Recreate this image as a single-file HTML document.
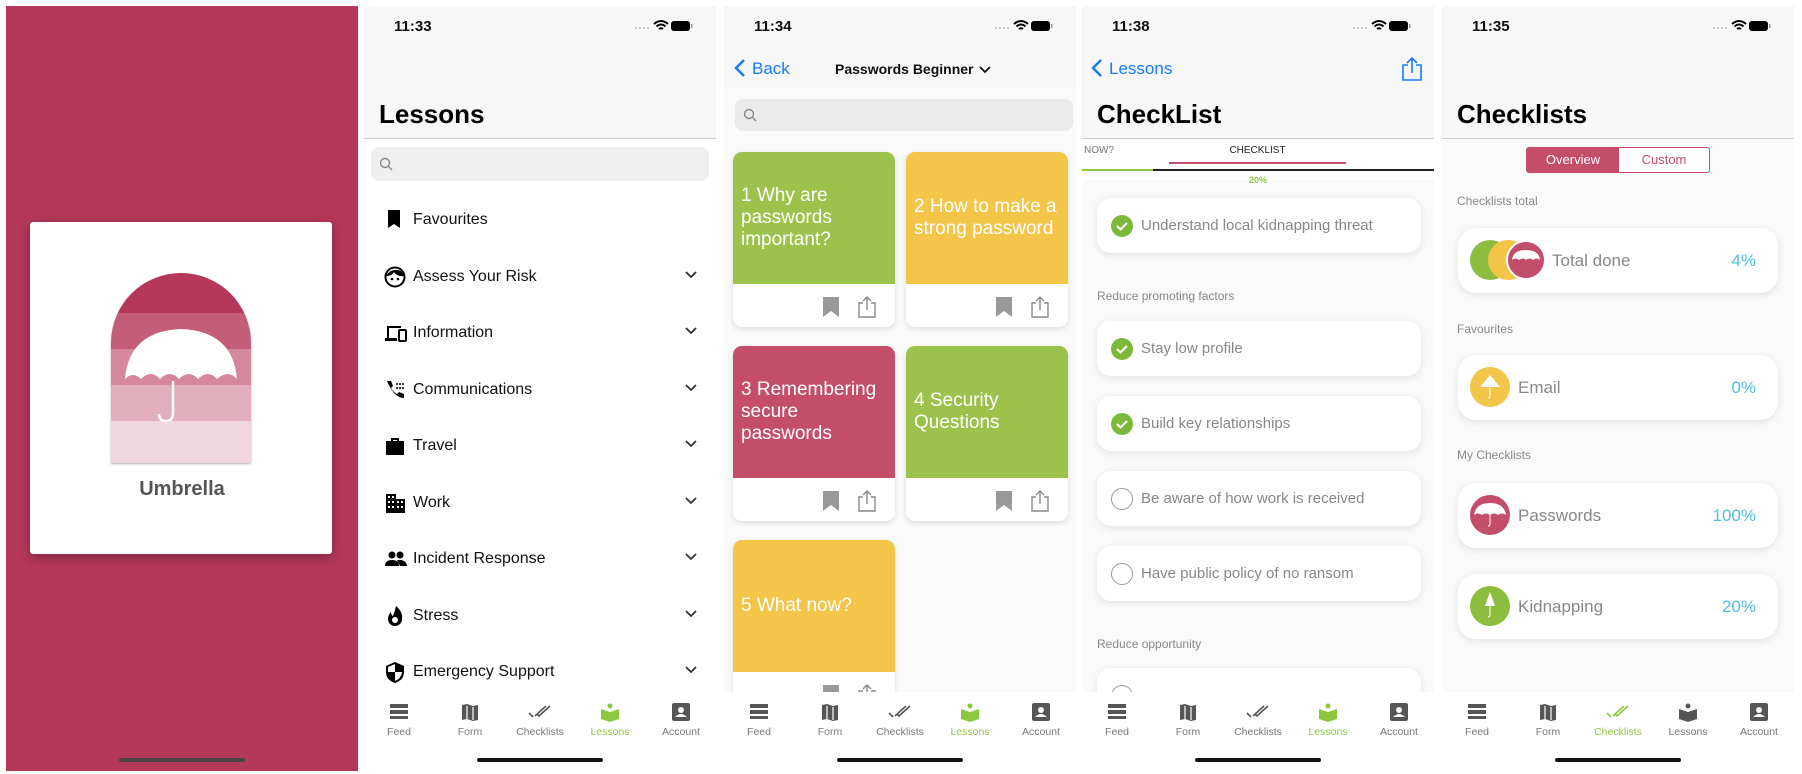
<!DOCTYPE html>
<html><head><meta charset="utf-8">
<style>
*{box-sizing:border-box;margin:0;padding:0}
body{width:1802px;height:774px;background:#fff;font-family:"Liberation Sans",sans-serif;position:relative;overflow:hidden}
.p{position:absolute;top:6px;width:352px;height:765px;overflow:hidden;background:#fff}
.a{position:absolute}
.hdr{position:absolute;left:0;top:0;width:352px;background:#f7f7f7;border-bottom:1px solid #ccc}
.time{position:absolute;left:30px;top:12px;font-size:15px;font-weight:bold;color:#111}
.sb{position:absolute;right:22px;top:13px;width:80px;height:14px}
.big{position:absolute;left:15px;font-size:26px;font-weight:bold;color:#000}
.search{position:absolute;background:#efefef;border-radius:8px}
.tab{position:absolute;left:0;top:686px;width:352px;height:79px;background:#fff}
.ti{position:absolute;top:10px;width:70px;text-align:center;font-size:10.5px;color:#777}
.ti svg{display:block;margin:0 auto 4px}
.home{position:absolute;left:113px;top:752px;width:126px;height:4px;border-radius:2px;background:#111}
.row{position:absolute;left:0;width:352px;height:30px;font-size:16px;color:#111}
.row .ic{position:absolute;left:20px;top:4px}
.row .tx{position:absolute;left:49px;top:6px}
.row .ch{position:absolute;left:321px;top:9px}
.card{position:absolute;width:162px;border-radius:9px;background:#fff;box-shadow:0 2px 6px rgba(0,0,0,.12);overflow:hidden}
.card .top{height:132px;color:#fff;font-size:19px;line-height:22px;padding:0 8px;display:flex;align-items:center}
.ci{position:absolute;left:15px;width:324px;height:55px;background:#fff;border-radius:14px;box-shadow:0 2px 8px rgba(0,0,0,.1);font-size:15px;color:#888}
.ci .ck{position:absolute;left:14px;top:17px;width:22px;height:22px;border-radius:50%}
.ci .t{position:absolute;left:44px;top:19px}
.sec{position:absolute;left:15px;font-size:12px;color:#888}
.cc{position:absolute;left:16px;width:320px;height:65px;background:#fff;border-radius:18px;box-shadow:0 2px 8px rgba(0,0,0,.1);font-size:17px;color:#888}
.cc .c{position:absolute;top:12px;width:40px;height:40px;border-radius:50%}
.cc .t{position:absolute;left:60px;top:23px}
.cc .pc{position:absolute;right:22px;top:23px;color:#4fc0e0}
</style></head><body>

<!-- Panel 1 -->
<div class="p" style="left:6px;background:#b5375a">
  <div class="a" style="left:24px;top:216px;width:302px;height:332px;background:#fff;border-radius:3px;box-shadow:0 3px 10px rgba(0,0,0,.3)"></div>
  <div class="a" style="left:105px;top:267px;width:140px;height:190px;border-radius:70px 70px 0 0;overflow:hidden;box-shadow:0 1px 2px rgba(0,0,0,.3)">
    <div style="height:40px;background:#b5375a"></div>
    <div style="height:36px;background:#c45d7a"></div>
    <div style="height:36px;background:#d4879d"></div>
    <div style="height:36px;background:#e2aebd"></div>
    <div style="height:42px;background:#f0d6de"></div>
    <svg class="a" style="left:0;top:0" width="140" height="190" viewBox="0 0 140 190"><path d="M14 106 Q18 58 70 56 Q122 58 126 106 Q117 96 106 106 Q97 96 87 106 Q78 96 68 106 Q59 96 49 106 Q40 96 30 106 Q22 98 14 106Z" fill="#fff"/><path d="M62 108 V140 Q62 148 55 148 Q48 148 48 141" stroke="#fff" stroke-width="2.5" fill="none"/></svg>
  </div>
  <div class="a" style="left:0;top:472px;width:352px;text-align:center;font-size:20px;color:#555;font-weight:bold">Umbrella</div>
  <div class="home" style="background:#444"></div>
</div>

<!-- Panel 2 Lessons -->
<div class="p" style="left:364px">
  <div class="hdr" style="height:133px"></div>
  <div class="time">11:33</div>
  <svg class="sb" viewBox="0 0 80 14"><g fill="#bbb"><circle cx="22" cy="9" r="1"/><circle cx="26" cy="9" r="1"/><circle cx="30" cy="9" r="1"/><circle cx="34" cy="9" r="1"/></g><path d="M40 5 Q47 -1 54 5 M42.5 7.5 Q47 3.5 51.5 7.5 M45 10 Q47 8.5 49 10" stroke="#000" stroke-width="2" fill="none"/><rect x="57" y="2" width="19" height="10" rx="3" fill="#000"/><rect x="77" y="5" width="1.5" height="4" fill="#999"/></svg>
  <div class="big" style="top:93px">Lessons</div>
  <div class="search" style="left:7px;top:141px;width:338px;height:34px"><svg class="a" style="left:8px;top:10px" width="14" height="14"><circle cx="6" cy="6" r="4.5" stroke="#888" stroke-width="1.4" fill="none"/><path d="M9.5 9.5 L13 13" stroke="#888" stroke-width="1.4"/></svg></div>
  <div class="row" style="top:199px"><svg class="ic" width="20" height="20"><path d="M4 1h12v18l-6-4-6 4z"/></svg><span class="tx">Favourites</span></div>
  <div class="row" style="top:256px"><svg class="ic" width="22" height="22"><circle cx="11" cy="11" r="9.5" stroke="#000" stroke-width="2" fill="none"/><path d="M2 10 Q6 3 14 4 Q19 5 20 10 Q13 11 10 6 Q8 10 2 10Z"/><circle cx="8" cy="13" r="1.3"/><circle cx="14" cy="13" r="1.3"/></svg><span class="tx">Assess Your Risk</span><svg class="ch" width="12" height="8"><path d="M1 1l5 5 5-5" stroke="#333" stroke-width="1.8" fill="none"/></svg></div>
  <div class="row" style="top:312px"><svg class="ic" width="24" height="22"><path d="M3 4h14v2H5v10H3zM1 16h12v3H1z"/><rect x="15" y="8" width="7" height="11" rx="1" stroke="#000" stroke-width="2" fill="none"/></svg><span class="tx">Information</span><svg class="ch" width="12" height="8"><path d="M1 1l5 5 5-5" stroke="#333" stroke-width="1.8" fill="none"/></svg></div>
  <div class="row" style="top:369px"><svg class="ic" width="22" height="22"><path d="M3 2l4 0 2 5-2 2q2 4 6 6l2-2 5 2v4q-10 0-17-17z"/><g fill="#000"><circle cx="13" cy="5" r="1"/><circle cx="16" cy="5" r="1"/><circle cx="19" cy="5" r="1"/><circle cx="13" cy="9" r="1"/><circle cx="16" cy="9" r="1"/><circle cx="19" cy="9" r="1"/></g></svg><span class="tx">Communications</span><svg class="ch" width="12" height="8"><path d="M1 1l5 5 5-5" stroke="#333" stroke-width="1.8" fill="none"/></svg></div>
  <div class="row" style="top:425px"><svg class="ic" width="22" height="22"><path d="M7 3h8v3h5v14H2V6h5zM9 5v1h4V5z"/></svg><span class="tx">Travel</span><svg class="ch" width="12" height="8"><path d="M1 1l5 5 5-5" stroke="#333" stroke-width="1.8" fill="none"/></svg></div>
  <div class="row" style="top:482px"><svg class="ic" width="22" height="22"><path d="M2 2h10v5h9v14H2z"/><g fill="#fff"><rect x="4" y="4" width="2" height="2"/><rect x="8" y="4" width="2" height="2"/><rect x="4" y="9" width="2" height="2"/><rect x="8" y="9" width="2" height="2"/><rect x="13" y="9" width="2" height="2"/><rect x="17" y="9" width="2" height="2"/><rect x="4" y="14" width="2" height="2"/><rect x="8" y="14" width="2" height="2"/><rect x="13" y="14" width="2" height="2"/><rect x="17" y="14" width="2" height="2"/></g></svg><span class="tx">Work</span><svg class="ch" width="12" height="8"><path d="M1 1l5 5 5-5" stroke="#333" stroke-width="1.8" fill="none"/></svg></div>
  <div class="row" style="top:538px"><svg class="ic" width="24" height="22"><circle cx="8" cy="7" r="3.5"/><circle cx="16" cy="7" r="3.5"/><path d="M1 18q0-6 7-6t7 6zM13 12q9-1 10 6h-7z"/></svg><span class="tx">Incident Response</span><svg class="ch" width="12" height="8"><path d="M1 1l5 5 5-5" stroke="#333" stroke-width="1.8" fill="none"/></svg></div>
  <div class="row" style="top:595px"><svg class="ic" width="22" height="22"><path d="M12 1q7 6 6 13a7 7 0 0 1-14 0q0-4 3-7 0 3 2 4 2-5 3-10z"/><circle cx="11" cy="15" r="3" fill="#fff"/></svg><span class="tx">Stress</span><svg class="ch" width="12" height="8"><path d="M1 1l5 5 5-5" stroke="#333" stroke-width="1.8" fill="none"/></svg></div>
  <div class="row" style="top:651px"><svg class="ic" width="22" height="22"><path d="M11 1l9 4v6q0 8-9 11-9-3-9-11V5z"/><path d="M11 3v8h7q-1 7-7 9V11H4V6z" fill="#fff"/></svg><span class="tx">Emergency Support</span><svg class="ch" width="12" height="8"><path d="M1 1l5 5 5-5" stroke="#333" stroke-width="1.8" fill="none"/></svg></div>
  <div class="tab">
    <div class="ti" style="left:0"><svg width="22" height="20"><rect x="2" y="2" width="18" height="4" fill="#555"/><rect x="2" y="8" width="18" height="4" fill="#555"/><rect x="2" y="14" width="18" height="3" fill="#555"/></svg>Feed</div>
    <div class="ti" style="left:71px"><svg width="22" height="20"><path d="M3 3l5-1 6 2 5-1v15l-5 1-6-2-5 1z" fill="#555"/><path d="M8 4v13M14 5v13" stroke="#fff" stroke-width="1.2"/></svg>Form</div>
    <div class="ti" style="left:141px"><svg width="26" height="20"><path d="M2 11l4 4 M8 14l11-10 M10 12l2 2 11-10" stroke="#555" stroke-width="1.6" fill="none"/></svg>Checklists</div>
    <div class="ti" style="left:211px;color:#8dc63f"><svg width="22" height="20"><circle cx="11" cy="4" r="2.5" fill="#8dc63f"/><path d="M2 7l9 3 9-3v10l-9 3-9-3z" fill="#8dc63f"/></svg>Lessons</div>
    <div class="ti" style="left:282px"><svg width="22" height="20"><rect x="2" y="1" width="18" height="18" rx="2" fill="#555"/><circle cx="11" cy="8" r="3" fill="#fff"/><path d="M5 15q6-6 12 0z" fill="#fff"/></svg>Account</div>
  </div>
  <div class="home"></div>
</div>

<!-- Panel 3 Passwords -->
<div class="p" style="left:724px;background:#fafafa">
  <div class="hdr" style="height:83px;border-bottom:none"></div>
  <div class="time">11:34</div>
  <svg class="sb" viewBox="0 0 80 14"><g fill="#bbb"><circle cx="22" cy="9" r="1"/><circle cx="26" cy="9" r="1"/><circle cx="30" cy="9" r="1"/><circle cx="34" cy="9" r="1"/></g><path d="M40 5 Q47 -1 54 5 M42.5 7.5 Q47 3.5 51.5 7.5 M45 10 Q47 8.5 49 10" stroke="#000" stroke-width="2" fill="none"/><rect x="57" y="2" width="19" height="10" rx="3" fill="#000"/><rect x="77" y="5" width="1.5" height="4" fill="#999"/></svg>
  <svg class="a" style="left:10px;top:52px" width="12" height="20"><path d="M10 2L2 10l8 8" stroke="#1a7cf5" stroke-width="2.5" fill="none"/></svg>
  <div class="a" style="left:28px;top:53px;font-size:17px;color:#1a7cf5">Back</div>
  <div class="a" style="left:111px;top:55px;font-size:14px;font-weight:bold;color:#111">Passwords Beginner</div>
  <svg class="a" style="left:255px;top:60px" width="12" height="8"><path d="M1 1l5 5 5-5" stroke="#111" stroke-width="1.8" fill="none"/></svg>
  <div class="search" style="left:11px;top:93px;width:338px;height:32px;background:#eaeaea"><svg class="a" style="left:8px;top:9px" width="14" height="14"><circle cx="6" cy="6" r="4.5" stroke="#888" stroke-width="1.4" fill="none"/><path d="M9.5 9.5 L13 13" stroke="#888" stroke-width="1.4"/></svg></div>
  <div class="card" style="left:9px;top:146px;height:175px"><div class="top" style="background:#9bc34b">1 Why are passwords important?</div><svg class="a" style="left:88px;top:143px" width="60" height="24"><path d="M2 2h16v20l-8-6-8 6z" fill="#999"/><path d="M42 8h-4v14h16V8h-4 M46 15V2 M42 6l4-4 4 4" stroke="#888" stroke-width="1.4" fill="none"/></svg></div>
  <div class="card" style="left:182px;top:146px;height:175px"><div class="top" style="background:#f3c548">2 How to make a strong password</div><svg class="a" style="left:88px;top:143px" width="60" height="24"><path d="M2 2h16v20l-8-6-8 6z" fill="#999"/><path d="M42 8h-4v14h16V8h-4 M46 15V2 M42 6l4-4 4 4" stroke="#888" stroke-width="1.4" fill="none"/></svg></div>
  <div class="card" style="left:9px;top:340px;height:175px"><div class="top" style="background:#c44d6a">3 Remembering secure passwords</div><svg class="a" style="left:88px;top:143px" width="60" height="24"><path d="M2 2h16v20l-8-6-8 6z" fill="#999"/><path d="M42 8h-4v14h16V8h-4 M46 15V2 M42 6l4-4 4 4" stroke="#888" stroke-width="1.4" fill="none"/></svg></div>
  <div class="card" style="left:182px;top:340px;height:175px"><div class="top" style="background:#9bc34b">4 Security Questions</div><svg class="a" style="left:88px;top:143px" width="60" height="24"><path d="M2 2h16v20l-8-6-8 6z" fill="#999"/><path d="M42 8h-4v14h16V8h-4 M46 15V2 M42 6l4-4 4 4" stroke="#888" stroke-width="1.4" fill="none"/></svg></div>
  <div class="card" style="left:9px;top:534px;height:175px"><div class="top" style="background:#f3c548">5 What now?</div><svg class="a" style="left:88px;top:143px" width="60" height="24"><path d="M2 2h16v20l-8-6-8 6z" fill="#999"/><path d="M42 8h-4v14h16V8h-4 M46 15V2 M42 6l4-4 4 4" stroke="#888" stroke-width="1.4" fill="none"/></svg></div>
  <div class="tab">
    <div class="ti" style="left:0"><svg width="22" height="20"><rect x="2" y="2" width="18" height="4" fill="#555"/><rect x="2" y="8" width="18" height="4" fill="#555"/><rect x="2" y="14" width="18" height="3" fill="#555"/></svg>Feed</div>
    <div class="ti" style="left:71px"><svg width="22" height="20"><path d="M3 3l5-1 6 2 5-1v15l-5 1-6-2-5 1z" fill="#555"/><path d="M8 4v13M14 5v13" stroke="#fff" stroke-width="1.2"/></svg>Form</div>
    <div class="ti" style="left:141px"><svg width="26" height="20"><path d="M2 11l4 4 M8 14l11-10 M10 12l2 2 11-10" stroke="#555" stroke-width="1.6" fill="none"/></svg>Checklists</div>
    <div class="ti" style="left:211px;color:#8dc63f"><svg width="22" height="20"><circle cx="11" cy="4" r="2.5" fill="#8dc63f"/><path d="M2 7l9 3 9-3v10l-9 3-9-3z" fill="#8dc63f"/></svg>Lessons</div>
    <div class="ti" style="left:282px"><svg width="22" height="20"><rect x="2" y="1" width="18" height="18" rx="2" fill="#555"/><circle cx="11" cy="8" r="3" fill="#fff"/><path d="M5 15q6-6 12 0z" fill="#fff"/></svg>Account</div>
  </div>
  <div class="home"></div>
</div>

<!-- Panel 4 CheckList -->
<div class="p" style="left:1082px;background:#fafafa">
  <div class="hdr" style="height:133px"></div>
  <div class="time">11:38</div>
  <svg class="sb" viewBox="0 0 80 14"><g fill="#bbb"><circle cx="22" cy="9" r="1"/><circle cx="26" cy="9" r="1"/><circle cx="30" cy="9" r="1"/><circle cx="34" cy="9" r="1"/></g><path d="M40 5 Q47 -1 54 5 M42.5 7.5 Q47 3.5 51.5 7.5 M45 10 Q47 8.5 49 10" stroke="#000" stroke-width="2" fill="none"/><rect x="57" y="2" width="19" height="10" rx="3" fill="#000"/><rect x="77" y="5" width="1.5" height="4" fill="#999"/></svg>
  <svg class="a" style="left:9px;top:52px" width="12" height="20"><path d="M10 2L2 10l8 8" stroke="#1a7cf5" stroke-width="2.5" fill="none"/></svg>
  <div class="a" style="left:27px;top:53px;font-size:17px;color:#1a7cf5">Lessons</div>
  <svg class="a" style="left:319px;top:50px" width="22" height="26"><path d="M7 9H2v15h18V9h-5 M11 17V2 M6 7l5-5 5 5" stroke="#1a7cf5" stroke-width="1.6" fill="none"/></svg>
  <div class="big" style="top:93px">CheckList</div>
  <div class="a" style="left:0;top:134px;width:352px;height:40px;background:#fff"></div>
  <div class="a" style="left:2px;top:139px;font-size:10px;color:#777">NOW?</div>
  <div class="a" style="left:87px;top:139px;width:177px;text-align:center;font-size:10px;color:#222">CHECKLIST</div>
  <div class="a" style="left:87px;top:156px;width:177px;height:2px;background:#c44d6a"></div>
  <div class="a" style="left:0;top:163px;width:352px;height:2px;background:#222"></div>
  <div class="a" style="left:0;top:163px;width:71px;height:2px;background:#8dc63f"></div>
  <div class="a" style="left:0;top:169px;width:352px;text-align:center;font-size:9px;font-weight:bold;color:#8dc63f">20%</div>
  <div class="ci" style="top:192px"><div class="ck" style="background:#7cb93a"></div><svg class="a" style="left:18px;top:22px" width="14" height="12"><path d="M2 6l3.5 3.5L12 3" stroke="#fff" stroke-width="2" fill="none"/></svg><span class="t">Understand local kidnapping threat</span></div>
  <div class="sec" style="top:283px">Reduce promoting factors</div>
  <div class="ci" style="top:315px"><div class="ck" style="background:#7cb93a"></div><svg class="a" style="left:18px;top:22px" width="14" height="12"><path d="M2 6l3.5 3.5L12 3" stroke="#fff" stroke-width="2" fill="none"/></svg><span class="t">Stay low profile</span></div>
  <div class="ci" style="top:390px"><div class="ck" style="background:#7cb93a"></div><svg class="a" style="left:18px;top:22px" width="14" height="12"><path d="M2 6l3.5 3.5L12 3" stroke="#fff" stroke-width="2" fill="none"/></svg><span class="t">Build key relationships</span></div>
  <div class="ci" style="top:465px"><div class="ck" style="border:1.5px solid #999"></div><span class="t">Be aware of how work is received</span></div>
  <div class="ci" style="top:540px"><div class="ck" style="border:1.5px solid #999"></div><span class="t">Have public policy of no ransom</span></div>
  <div class="sec" style="top:631px">Reduce opportunity</div>
  <div class="ci" style="top:662px"><div class="ck" style="border:1.5px solid #999"></div></div>
  <div class="tab">
    <div class="ti" style="left:0"><svg width="22" height="20"><rect x="2" y="2" width="18" height="4" fill="#555"/><rect x="2" y="8" width="18" height="4" fill="#555"/><rect x="2" y="14" width="18" height="3" fill="#555"/></svg>Feed</div>
    <div class="ti" style="left:71px"><svg width="22" height="20"><path d="M3 3l5-1 6 2 5-1v15l-5 1-6-2-5 1z" fill="#555"/><path d="M8 4v13M14 5v13" stroke="#fff" stroke-width="1.2"/></svg>Form</div>
    <div class="ti" style="left:141px"><svg width="26" height="20"><path d="M2 11l4 4 M8 14l11-10 M10 12l2 2 11-10" stroke="#555" stroke-width="1.6" fill="none"/></svg>Checklists</div>
    <div class="ti" style="left:211px;color:#8dc63f"><svg width="22" height="20"><circle cx="11" cy="4" r="2.5" fill="#8dc63f"/><path d="M2 7l9 3 9-3v10l-9 3-9-3z" fill="#8dc63f"/></svg>Lessons</div>
    <div class="ti" style="left:282px"><svg width="22" height="20"><rect x="2" y="1" width="18" height="18" rx="2" fill="#555"/><circle cx="11" cy="8" r="3" fill="#fff"/><path d="M5 15q6-6 12 0z" fill="#fff"/></svg>Account</div>
  </div>
  <div class="home"></div>
</div>

<!-- Panel 5 Checklists -->
<div class="p" style="left:1442px;background:#fafafa">
  <div class="hdr" style="height:133px"></div>
  <div class="time">11:35</div>
  <svg class="sb" viewBox="0 0 80 14"><g fill="#bbb"><circle cx="22" cy="9" r="1"/><circle cx="26" cy="9" r="1"/><circle cx="30" cy="9" r="1"/><circle cx="34" cy="9" r="1"/></g><path d="M40 5 Q47 -1 54 5 M42.5 7.5 Q47 3.5 51.5 7.5 M45 10 Q47 8.5 49 10" stroke="#000" stroke-width="2" fill="none"/><rect x="57" y="2" width="19" height="10" rx="3" fill="#000"/><rect x="77" y="5" width="1.5" height="4" fill="#999"/></svg>
  <div class="big" style="top:93px">Checklists</div>
  <div class="a" style="left:84px;top:141px;width:184px;height:26px;border:1px solid #c44d6a;border-radius:3px;background:#fff;font-size:13px;display:flex">
    <div style="width:92px;background:#c44d6a;color:#fff;text-align:center;line-height:24px">Overview</div>
    <div style="flex:1;color:#c44d6a;text-align:center;line-height:24px">Custom</div>
  </div>
  <div class="sec" style="top:188px">Checklists total</div>
  <div class="cc" style="top:222px">
    <div class="c" style="left:12px;background:#8dbd3f"></div>
    <div class="c" style="left:30px;background:#f3c548"></div>
    <div class="c" style="left:48px;background:#c44d6a;border:2px solid #fff"><svg width="36" height="36"><path d="M4 18Q5 8 18 8 31 8 32 18q-3.5-3-7 0-3.5-3-7 0-3.5-3-7 0-3.5-3-7 0z" fill="#fff"/></svg></div>
    <span class="t" style="left:94px">Total done</span><span class="pc">4%</span></div>
  <div class="sec" style="top:316px">Favourites</div>
  <div class="cc" style="top:349px"><div class="c" style="left:12px;background:#f3c548"><svg width="40" height="40"><path d="M10 20L20 8 30 20z" fill="#fff"/><path d="M20 20v9q0 2-2 2" stroke="#fff" stroke-width="1" fill="none"/></svg></div><span class="t">Email</span><span class="pc">0%</span></div>
  <div class="sec" style="top:442px">My Checklists</div>
  <div class="cc" style="top:477px"><div class="c" style="left:12px;background:#c44d6a"><svg width="40" height="40"><path d="M4 20Q6 8 20 8 34 8 36 20q-4-3-8 0-4-3-8 0-4-3-8 0-4-3-8 0z" fill="#fff"/><path d="M20 20v9q0 2-2 2" stroke="#fff" stroke-width="1" fill="none"/></svg></div><span class="t">Passwords</span><span class="pc">100%</span></div>
  <div class="cc" style="top:568px"><div class="c" style="left:12px;background:#8dbd3f"><svg width="40" height="40"><path d="M15 20L20 6 25 20z" fill="#fff"/><path d="M20 20v9q0 2-2 2" stroke="#fff" stroke-width="1" fill="none"/></svg></div><span class="t">Kidnapping</span><span class="pc">20%</span></div>
  <div class="tab">
    <div class="ti" style="left:0"><svg width="22" height="20"><rect x="2" y="2" width="18" height="4" fill="#555"/><rect x="2" y="8" width="18" height="4" fill="#555"/><rect x="2" y="14" width="18" height="3" fill="#555"/></svg>Feed</div>
    <div class="ti" style="left:71px"><svg width="22" height="20"><path d="M3 3l5-1 6 2 5-1v15l-5 1-6-2-5 1z" fill="#555"/><path d="M8 4v13M14 5v13" stroke="#fff" stroke-width="1.2"/></svg>Form</div>
    <div class="ti" style="left:141px;color:#8dc63f"><svg width="26" height="20"><path d="M2 11l4 4 M8 14l11-10 M10 12l2 2 11-10" stroke="#8dc63f" stroke-width="1.6" fill="none"/></svg>Checklists</div>
    <div class="ti" style="left:211px"><svg width="22" height="20"><circle cx="11" cy="4" r="2.5" fill="#555"/><path d="M2 7l9 3 9-3v10l-9 3-9-3z" fill="#555"/></svg>Lessons</div>
    <div class="ti" style="left:282px"><svg width="22" height="20"><rect x="2" y="1" width="18" height="18" rx="2" fill="#555"/><circle cx="11" cy="8" r="3" fill="#fff"/><path d="M5 15q6-6 12 0z" fill="#fff"/></svg>Account</div>
  </div>
  <div class="home"></div>
</div>

</body></html>
